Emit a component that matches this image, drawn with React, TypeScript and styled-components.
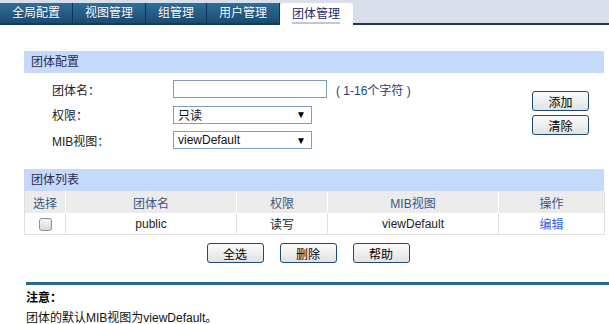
import styled, { createGlobalStyle } from 'styled-components'

const GlobalStyle = createGlobalStyle`
	body {
		margin: 0;
		background: #fff;
		font-family: 'Liberation Sans', 'Noto Sans CJK SC', sans-serif;
		font-size: 12px;
		color: #222;
	}
`

const tabs = ['全局配置', '视图管理', '组管理', '用户管理', '团体管理']

const TabBar = styled.div`
	display: flex;
	align-items: flex-end;
	height: 20px;
	padding-top: 3px;
	background: #d8dfea;
	border-bottom: 2px solid #173b52;
`

const Tab = styled.div<{ $active?: boolean }>`
	display: flex;
	align-items: center;
	padding: 0 12px;
	color: ${(p) => (p.$active ? '#262a6e' : '#fff')};
	background: ${(p) => (p.$active ? '#fff' : 'linear-gradient(#2f6f9b, #1b4b71)')};
	border-right: 1px solid ${(p) => (p.$active ? '#fff' : '#0f3450')};
	border-radius: ${(p) => (p.$active ? '4px 4px 0 0' : '0')};
	margin-bottom: ${(p) => (p.$active ? '-2px' : '0')};
	height: ${(p) => (p.$active ? '22px' : '20px')};
	text-shadow: ${(p) => (p.$active ? 'none' : '0 0 1px rgba(0,0,0,0.4)')};
`

const TabText = styled.span<{ $active?: boolean }>`
	padding-top: 2px;
	border-bottom: 2px solid ${(p) => (p.$active ? '#bfc8d0' : 'transparent')};
	line-height: 16px;
`

const Content = styled.div`
	padding: 26px 5px 0 24px;
`

const SectionHead = styled.div`
	height: 22px;
	line-height: 22px;
	padding-left: 7px;
	background: #c5d9fb;
	color: #2d2d4d;
`

const FormBody = styled.div`
	display: flex;
	padding-top: 7px;
	height: 71px;
`

const Fields = styled.div`
	display: grid;
	grid-template-columns: 121px auto;
	grid-auto-rows: 18px;
	row-gap: 7.5px;
	padding-left: 28px;
	align-items: center;
`

const Label = styled.div`
	color: #222;
`

const FieldCell = styled.div`
	display: flex;
	align-items: center;
`

const TextInput = styled.input`
	box-sizing: border-box;
	width: 154px;
	height: 18px;
	border: 1px solid #7f9db9;
	padding: 0 3px;
	margin: 0;
	font: inherit;
`

const Hint = styled.span`
	margin-left: 9px;
	color: #1f3a7e;
`

const SelectBox = styled.div`
	box-sizing: border-box;
	width: 139px;
	height: 18px;
	border: 1px solid #7f9db9;
	display: flex;
	align-items: center;
	justify-content: space-between;
	padding: 0 5px 0 4px;
	color: #111;
`

const Arrow = styled.span`
	font-size: 10px;
	color: #000;
`

const ActionCol = styled.div`
	display: flex;
	flex-direction: column;
	gap: 4px;
	margin-left: auto;
	margin-right: 15px;
	padding-top: 11px;
`

const Button = styled.button`
	box-sizing: border-box;
	width: 57px;
	height: 20px;
	padding: 0;
	border: 1px solid #1d4a73;
	border-radius: 3px;
	background: linear-gradient(#fbfbfb, #e2e2e2);
	font: inherit;
	color: #000;
`

const ListSection = styled.div`
	margin-top: 18px;
`

const Table = styled.table`
	width: 580px;
	border-collapse: collapse;
	table-layout: fixed;
`

const Th = styled.th`
	height: 22px;
	padding: 0;
	background: #ebebeb;
	border-left: 1px solid #fff;
	border-right: 1px solid #fff;
	font-weight: normal;
	color: #3b5680;
	&:first-child {
		border-left: 1px solid #e0e0e0;
	}
	&:last-child {
		border-right: 1px solid #e0e0e0;
	}
`

const Td = styled.td`
	height: 21px;
	padding: 0;
	text-align: center;
	border: 1px solid #e0e0e0;
	border-top: none;
	color: #222;
`

const CheckMark = styled.span`
	display: inline-block;
	width: 11px;
	height: 11px;
	border: 1px solid #8e8e8e;
	border-radius: 3px;
	background: linear-gradient(#f6f6f6, #d9d9d9);
	vertical-align: middle;
`

const Link = styled.a`
	color: #3563ec;
	text-decoration: none;
`

const ButtonRow = styled.div`
	display: flex;
	justify-content: center;
	gap: 16px;
	margin-top: 8px;
	padding-right: 12px;
`

const Note = styled.div`
	margin: 19px 0 0 26px;
	border-top: 3px solid #2a6893;
	padding-top: 3px;
	line-height: 20px;
	color: #111;
`

const NoteTitle = styled.div`
	font-weight: bold;
	color: #000;
`

export default function App() {
	return (
		<>
			<GlobalStyle />
			<TabBar>
				{tabs.map((t, i) => {
					const active = i === tabs.length - 1
					return (
						<Tab key={t} $active={active}>
							<TabText $active={active}>{t}</TabText>
						</Tab>
					)
				})}
			</TabBar>
			<Content>
				<SectionHead>团体配置</SectionHead>
				<FormBody>
					<Fields>
						<Label>团体名：</Label>
						<FieldCell>
							<TextInput />
							<Hint>( 1-16个字符 )</Hint>
						</FieldCell>
						<Label>权限：</Label>
						<FieldCell>
							<SelectBox>
								<span>只读</span>
								<Arrow>▼</Arrow>
							</SelectBox>
						</FieldCell>
						<Label>MIB视图：</Label>
						<FieldCell>
							<SelectBox>
								<span>viewDefault</span>
								<Arrow>▼</Arrow>
							</SelectBox>
						</FieldCell>
					</Fields>
					<ActionCol>
						<Button>添加</Button>
						<Button>清除</Button>
					</ActionCol>
				</FormBody>
				<ListSection>
					<SectionHead>团体列表</SectionHead>
					<Table>
						<colgroup>
							<col style={{ width: 41 }} />
							<col style={{ width: 171 }} />
							<col style={{ width: 91 }} />
							<col style={{ width: 171 }} />
							<col style={{ width: 106 }} />
						</colgroup>
						<thead>
							<tr>
								<Th>选择</Th>
								<Th>团体名</Th>
								<Th>权限</Th>
								<Th>MIB视图</Th>
								<Th>操作</Th>
							</tr>
						</thead>
						<tbody>
							<tr>
								<Td>
									<CheckMark />
								</Td>
								<Td>public</Td>
								<Td>读写</Td>
								<Td>viewDefault</Td>
								<Td>
									<Link>编辑</Link>
								</Td>
							</tr>
						</tbody>
					</Table>
					<ButtonRow>
						<Button>全选</Button>
						<Button>删除</Button>
						<Button>帮助</Button>
					</ButtonRow>
				</ListSection>
			</Content>
			<Note>
				<NoteTitle>注意：</NoteTitle>
				<div>团体的默认MIB视图为viewDefault。</div>
			</Note>
		</>
	)
}
